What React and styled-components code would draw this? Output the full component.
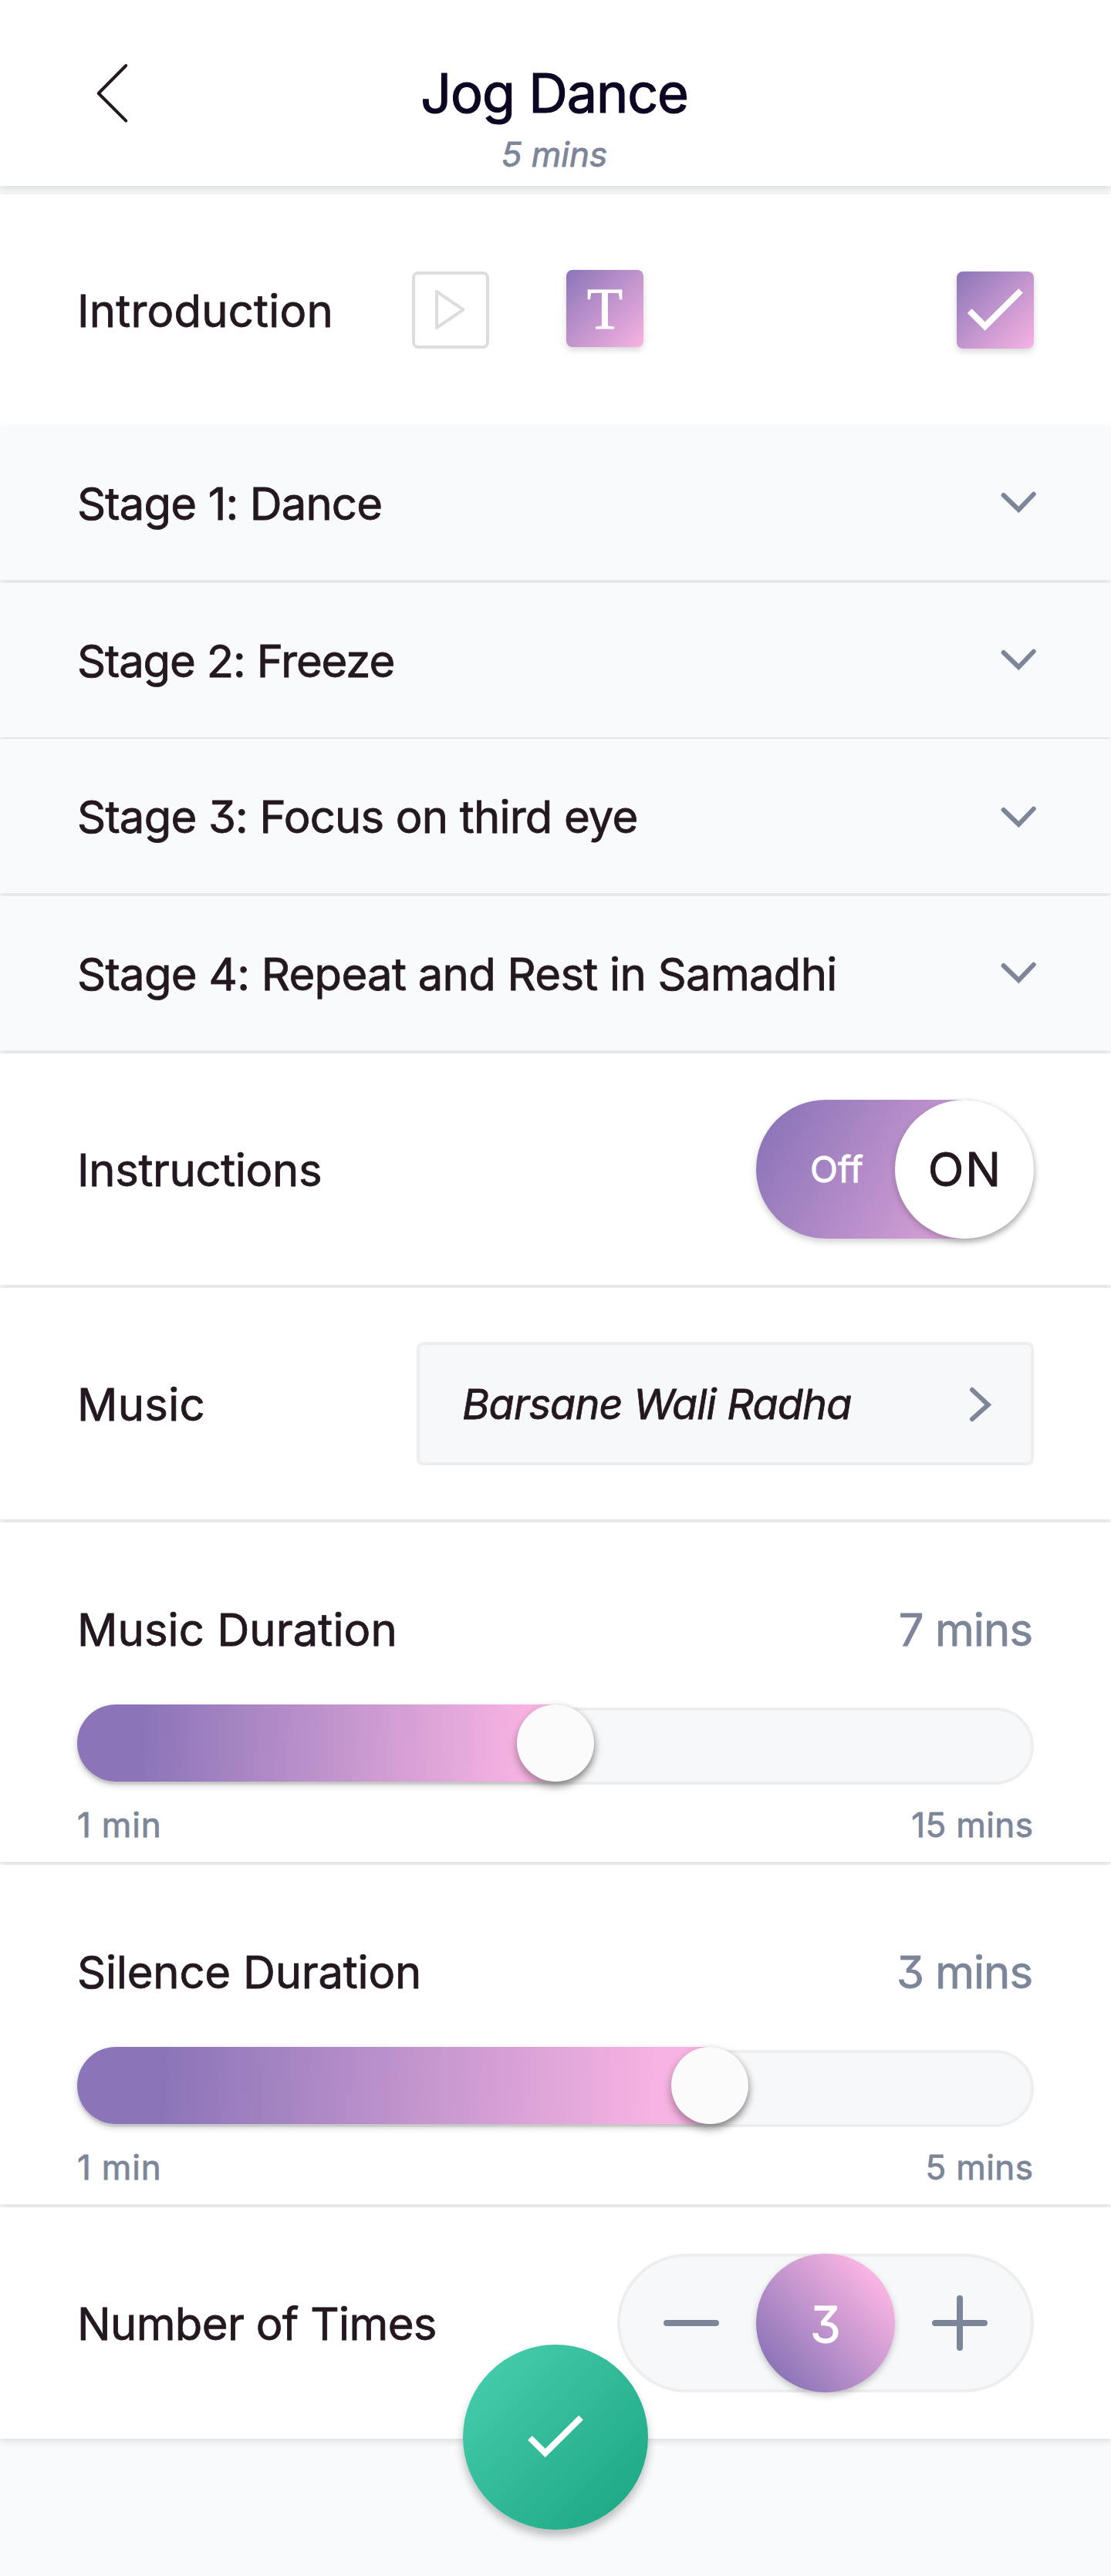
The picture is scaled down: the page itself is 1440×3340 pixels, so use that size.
import React from "react";
import styled, { createGlobalStyle } from "styled-components";

const color = {
  ink: "#231720",
  title: "#0d0521",
  muted: "#7d8699",
  page: "#f9fafc",
  well: "#f7f8fa",
  edge: "#eeeeee",
  purple: "#8b75b8",
  pink: "#f7b3e2",
};

const GlobalStyle = createGlobalStyle`
  * { box-sizing: border-box; }
  body {
    margin: 0;
    background: ${color.page};
    color: ${color.ink};
    font-family: Inter, "Liberation Sans", sans-serif;
    font-feature-settings: "cv09";
    font-weight: 400;
    -webkit-text-stroke: 0.8px currentColor;
  }
  button {
    border: 0;
    padding: 0;
    background: none;
    color: inherit;
    font: inherit;
    font-feature-settings: inherit;
    cursor: pointer;
  }
  svg { display: block; flex: none; }
`;

const Page = styled.div`
  display: flex;
  flex-direction: column;
  width: 1440px;
  height: 3340px;
  overflow: hidden;
`;

const Text = styled.span`
  font-size: ${(p) => p.$size || 58}px;
  line-height: ${(p) => p.$line || 60}px;
  letter-spacing: ${(p) => p.$track || 0}px;
  margin-right: ${(p) => -(p.$track || 0)}px;
  color: ${(p) => p.$color || color.ink};
  -webkit-text-stroke-color: ${(p) => p.$color || color.ink};
  white-space: nowrap;
`;

const ItalicText = styled(Text)`
  font-style: italic;
  font-feature-settings: "cv09", "cv11";
`;

const RowLabel = styled(Text)`
  padding-top: 2px;
`;

const Header = styled.header`
  display: grid;
  grid-template-columns: 290px 1fr 293px;
  height: 241px;
  flex: none;
  padding-top: 81px;
  background: #fff;
  box-shadow: 0 4px 12px rgba(0, 0, 0, 0.13);
`;

const BackButton = styled.button`
  width: 48px;
  height: 82px;
  margin: -1px 0 0 121px;
`;

const Heading = styled.div`
  display: flex;
  flex-direction: column;
  align-items: center;
  gap: 14px;
`;

const Title = styled.h1`
  margin: 0;
  font-size: 70px;
  font-weight: 400;
  line-height: 80px;
  letter-spacing: -1.1px;
  color: ${color.title};
  -webkit-text-stroke: 1.2px ${color.title};
`;

const Row = styled.section`
  display: flex;
  align-items: center;
  justify-content: space-between;
  flex: none;
  height: ${(p) => p.$height || 300}px;
  margin-top: ${(p) => (p.$gap === undefined ? 4 : p.$gap)}px;
  padding: 0 100px;
  background: ${(p) => (p.$tinted ? color.page : "#fff")};
  box-shadow: 0 4px 8px rgba(0, 0, 0, 0.1);
`;

const StageToggle = styled.button`
  width: 48px;
  height: 36px;
  margin: ${(p) => p.$drop}px -4px 0 0;
`;

const IntroLabel = styled.div`
  display: flex;
  width: 434px;
`;

const Tile = styled.button`
  display: flex;
  align-items: center;
  justify-content: center;
  width: 100px;
  height: 100px;
  border-radius: 8px;
`;

const OutlineTile = styled(Tile)`
  border: 4px solid #dddddd;
`;

const GradientTile = styled(Tile)`
  background: linear-gradient(135deg, ${color.purple}, ${color.pink});
  box-shadow: 0 4px 8px rgba(0, 0, 0, 0.15);
`;

const TextTile = styled(GradientTile)`
  margin: 0 auto 4px 100px;
  font-family: "Liberation Serif", serif;
  font-size: 76px;
  line-height: 100px;
  color: #fff;
  -webkit-text-stroke: 0.8px #fff;
`;

const Switch = styled.button`
  display: flex;
  justify-content: space-between;
  align-items: center;
  width: 360px;
  height: 180px;
  padding-left: 70px;
  border-radius: 90px;
  background: linear-gradient(
    120deg,
    ${color.purple} 6%,
    #d69fd6 74%,
    ${color.pink}
  );
  box-shadow: 0 4px 8px rgba(0, 0, 0, 0.18);
`;

const SwitchKnob = styled.span`
  display: flex;
  align-items: center;
  justify-content: center;
  width: 180px;
  height: 180px;
  border-radius: 50%;
  background: #fff;
  box-shadow: 0 4px 8px rgba(0, 0, 0, 0.22);
`;

const MusicPicker = styled.button`
  display: flex;
  align-items: center;
  justify-content: space-between;
  width: 800px;
  height: 160px;
  padding: 2px 47px 0 55px;
  border: 4px solid ${color.edge};
  border-radius: 8px;
  background: ${color.well};
`;

const DurationSection = styled(Row)`
  display: block;
  padding-top: 109px;
`;

const SpreadLine = styled.div`
  display: flex;
  justify-content: space-between;
  padding-right: 1px;
`;

const SliderRail = styled.div`
  display: grid;
  height: 104px;
  margin: 67px 0 27px;
`;

const SliderTrack = styled.div`
  grid-area: 1 / 1;
  height: 100px;
  margin-top: 4px;
  border: 4px solid ${color.edge};
  border-radius: 50px;
  background: ${color.well};
`;

const SliderFill = styled.div`
  grid-area: 1 / 1;
  display: flex;
  justify-content: flex-end;
  height: 100px;
  border-radius: 50px;
  background: linear-gradient(
    93deg,
    ${color.purple} 13%,
    ${color.pink} 86%
  );
  box-shadow: 0 4px 8px rgba(0, 0, 0, 0.22);
`;

const SliderKnob = styled.span`
  width: 100px;
  height: 100px;
  border-radius: 50%;
  background: #fbfbfb;
  box-shadow: 0 6px 12px rgba(0, 0, 0, 0.35);
`;

const Stepper = styled.div`
  display: flex;
  align-items: center;
  width: 540px;
  height: 180px;
  border: 4px solid ${color.edge};
  border-radius: 90px;
  background: ${color.well};
`;

const StepButton = styled.button`
  display: flex;
  flex: 1;
  justify-content: ${(p) => (p.$side === "left" ? "flex-end" : "flex-start")};
  padding: ${(p) => (p.$side === "left" ? "0 48px 0 0" : "0 0 0 48px")};
`;

const StepValue = styled.span`
  display: flex;
  align-items: center;
  justify-content: center;
  flex: none;
  width: 180px;
  height: 180px;
  margin: -4px 0;
  padding-top: 3px;
  border-radius: 50%;
  background: linear-gradient(47deg, ${color.purple} 14%, ${color.pink} 83%);
  box-shadow: 0 4px 8px rgba(0, 0, 0, 0.22);
`;

const Footer = styled.footer`
  display: flex;
  justify-content: center;
  flex: none;
  height: 178px;
`;

const ConfirmButton = styled.button`
  display: flex;
  justify-content: center;
  width: 240px;
  height: 240px;
  margin-top: -122px;
  padding-top: 86px;
  border-radius: 50%;
  background: linear-gradient(135deg, #48ceae 5%, #1ca682 95%);
  box-shadow: 0 8px 12px rgba(0, 0, 0, 0.25);
`;

const Stroke = ({ w, h, d, stroke, width, cap = "round", join = "miter" }) => (
  <svg width={w} height={h} viewBox={`0 0 ${w} ${h}`} fill="none" aria-hidden="true">
    <path d={d} stroke={stroke} strokeWidth={width} strokeLinecap={cap} strokeLinejoin={join} />
  </svg>
);

const stages = [
  { name: "Stage 1: Dance", track: -0.85, gap: 0, drop: 4 },
  { name: "Stage 2: Freeze", track: -1.15, gap: 4, drop: 4 },
  { name: "Stage 3: Focus on third eye", track: -0.8, gap: 2, drop: 7 },
  { name: "Stage 4: Repeat and Rest in Samadhi", track: -0.72, gap: 4, drop: 4 },
];

function Duration({ label, track, value, valueTrack, max, fill }) {
  return (
    <DurationSection $height={440}>
      <SpreadLine>
        <Text $track={track}>{label}</Text>
        <Text $color={color.muted} $track={valueTrack}>{value}</Text>
      </SpreadLine>
      <SliderRail>
        <SliderTrack />
        <SliderFill style={{ width: fill }}>
          <SliderKnob />
        </SliderFill>
      </SliderRail>
      <SpreadLine>
        <Text $size={44} $line={50} $track={0.8} $color={color.muted}>1 min</Text>
        <Text $size={44} $line={50} $track={0.4} $color={color.muted}>{max}</Text>
      </SpreadLine>
    </DurationSection>
  );
}

export default function App() {
  return (
    <Page>
      <GlobalStyle />
      <Header>
        <BackButton aria-label="Back">
          <Stroke w={48} h={82} d="M42.3 5 L6.7 41 L42.3 76.7" stroke={color.ink} width={4} join="round" />
        </BackButton>
        <Heading>
          <Title>Jog Dance</Title>
          <ItalicText $size={44} $line={50} $color={color.muted}>5 mins</ItalicText>
        </Heading>
      </Header>

      <Row $gap={11}>
        <IntroLabel>
          <RowLabel $track={0.2}>Introduction</RowLabel>
        </IntroLabel>
        <OutlineTile aria-label="Video">
          <Stroke w={92} h={92} d="M28 22 L62.5 45.5 L28 69 Z" stroke="#dddddd" width={4} join="round" />
        </OutlineTile>
        <TextTile>T</TextTile>
        <GradientTile aria-label="Selected">
          <Stroke w={100} h={100} d="M16.8 51.2 L36.7 71 L83 25" stroke="#fff" width={8} cap="butt" />
        </GradientTile>
      </Row>

      {stages.map((s) => (
        <Row key={s.name} $tinted $height={200} $gap={s.gap}>
          <RowLabel $track={s.track}>{s.name}</RowLabel>
          <StageToggle $drop={s.drop} aria-label="Expand">
            <Stroke w={48} h={36} d="M4.7 6 L24.3 25 L43.7 4.7" stroke={color.muted} width={6} />
          </StageToggle>
        </Row>
      ))}

      <Row>
        <RowLabel $track={-0.35}>Instructions</RowLabel>
        <Switch>
          <Text $size={47} $color="#ffffff">Off</Text>
          <SwitchKnob>
            <Text $size={61} $track={1.8}>ON</Text>
          </SwitchKnob>
        </Switch>
      </Row>

      <Row>
        <RowLabel $track={0.3}>Music</RowLabel>
        <MusicPicker>
          <ItalicText $size={54} $track={-0.8}>Barsane Wali Radha</ItalicText>
          <Stroke w={36} h={52} d="M7 7 L27.8 26.5 L7 45" stroke={color.muted} width={6} />
        </MusicPicker>
      </Row>

      <Duration label="Music Duration" track={0.1} value="7 mins" valueTrack={-0.9} max="15 mins" fill={670} />
      <Duration label="Silence Duration" track={-0.2} value="3 mins" valueTrack={-1} max="5 mins" fill={870} />

      <Row>
        <RowLabel $track={-0.65}>Number of Times</RowLabel>
        <Stepper>
          <StepButton $side="left" aria-label="Fewer">
            <Stroke w={72} h={72} d="M4 36 H68" stroke={color.muted} width={8} />
          </StepButton>
          <StepValue>
            <Text $size={65} $color="#ffffff">3</Text>
          </StepValue>
          <StepButton $side="right" aria-label="More">
            <Stroke w={72} h={72} d="M4 36 H68 M36 4 V68" stroke={color.muted} width={8} />
          </StepButton>
        </Stepper>
      </Row>

      <Footer>
        <ConfirmButton aria-label="Confirm">
          <Stroke w={84} h={68} d="M9 35 L28.7 54.7 L75 8.7" stroke="#fff" width={8} cap="butt" />
        </ConfirmButton>
      </Footer>
    </Page>
  );
}
